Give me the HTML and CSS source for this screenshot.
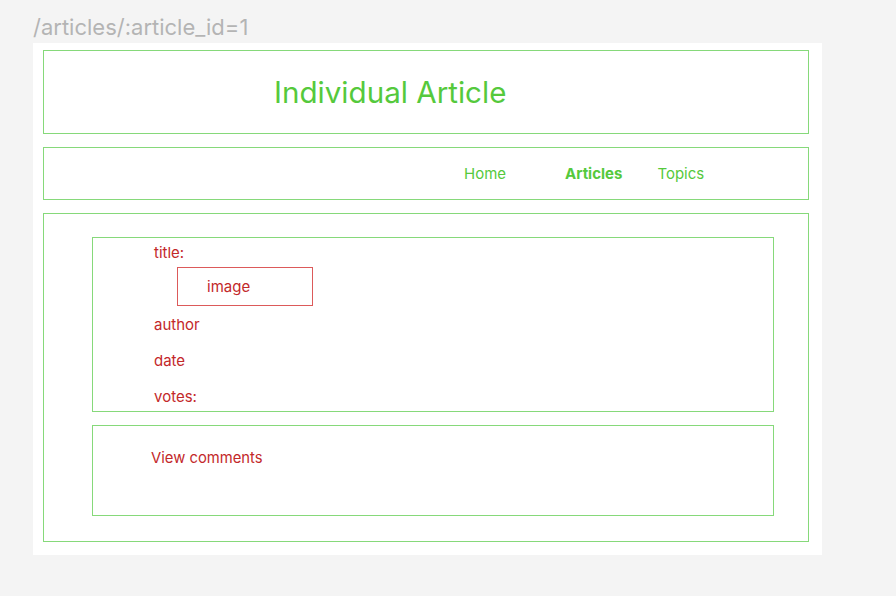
FILE: index.html
```html
<!DOCTYPE html>
<html>
<head>
<meta charset="utf-8">
<link rel="stylesheet" href="styles.css">
</head>
<body>
<div class="page">
  <div class="route">/articles/:article_id=1</div>
  <div class="frame">
    <header class="box header">
      <h1 class="title">Individual Article</h1>
    </header>
    <nav class="box nav">
      <a class="nav-link home">Home</a>
      <a class="nav-link active">Articles</a>
      <a class="nav-link topics">Topics</a>
    </nav>
    <main class="box content">
      <section class="inner article">
        <div class="field">title:</div>
        <div class="image-box">image</div>
        <div class="field">author</div>
        <div class="field">date</div>
        <div class="field">votes:</div>
      </section>
      <section class="inner comments">
        <div class="comments-link">View comments</div>
      </section>
    </main>
  </div>
</div>
</body>
</html>
```
FILE: styles.css
```css
* { box-sizing: border-box; }
html, body { margin: 0; padding: 0; }
body {
  background: #f4f4f4;
  font-family: Inter, "Noto Sans", sans-serif;
  width: 896px;
  height: 596px;
  overflow: hidden;
}
.page {
  padding: 13px 0 0 33px;
}
.route {
  font-size: 22px;
  line-height: 28px;
  color: #b4b4b4;
  height: 30px;
}
.frame {
  width: 789px;
  height: 512px;
  background: #fff;
  padding: 7px 13px 13px 10px;
  display: flex;
  flex-direction: column;
  gap: 13px;
}
.box {
  border: 1px solid #86d97a;
}
.header {
  height: 84px;
  display: flex;
  align-items: center;
  padding-left: 230px;
}
.title {
  margin: 0;
  font-weight: 400;
  font-size: 29.6px;
  color: #55c93c;
  line-height: 34px;
}
.nav {
  height: 53px;
  display: flex;
  align-items: center;
  padding-left: 420px;
}
.nav-link {
  font-size: 15px;
  line-height: 20px;
  color: #55c93c;
}
.nav-link.active {
  font-weight: 700;
  margin-left: 59px;
}
.nav-link.topics {
  margin-left: 35px;
}
.content {
  height: 329px;
  padding: 23px 34px 0 48px;
  display: flex;
  flex-direction: column;
  gap: 13px;
}
.inner {
  border: 1px solid #86d97a;
}
.article {
  height: 175px;
  padding: 5px 0 0 61px;
}
.field {
  font-size: 15px;
  line-height: 20px;
  color: #c3282a;
  margin-bottom: 16px;
}
.field:first-child { margin-bottom: 4px; }
.image-box {
  width: 136px;
  height: 39px;
  margin: 0 0 9px 23px;
  border: 1px solid #dc5a5a;
  font-size: 15px;
  color: #c3282a;
  padding-left: 29px;
  display: flex;
  align-items: center;
}
.comments {
  height: 91px;
  padding: 22px 0 0 58px;
}
.comments-link {
  font-size: 14.8px;
  line-height: 20px;
  color: #c3282a;
}
```
